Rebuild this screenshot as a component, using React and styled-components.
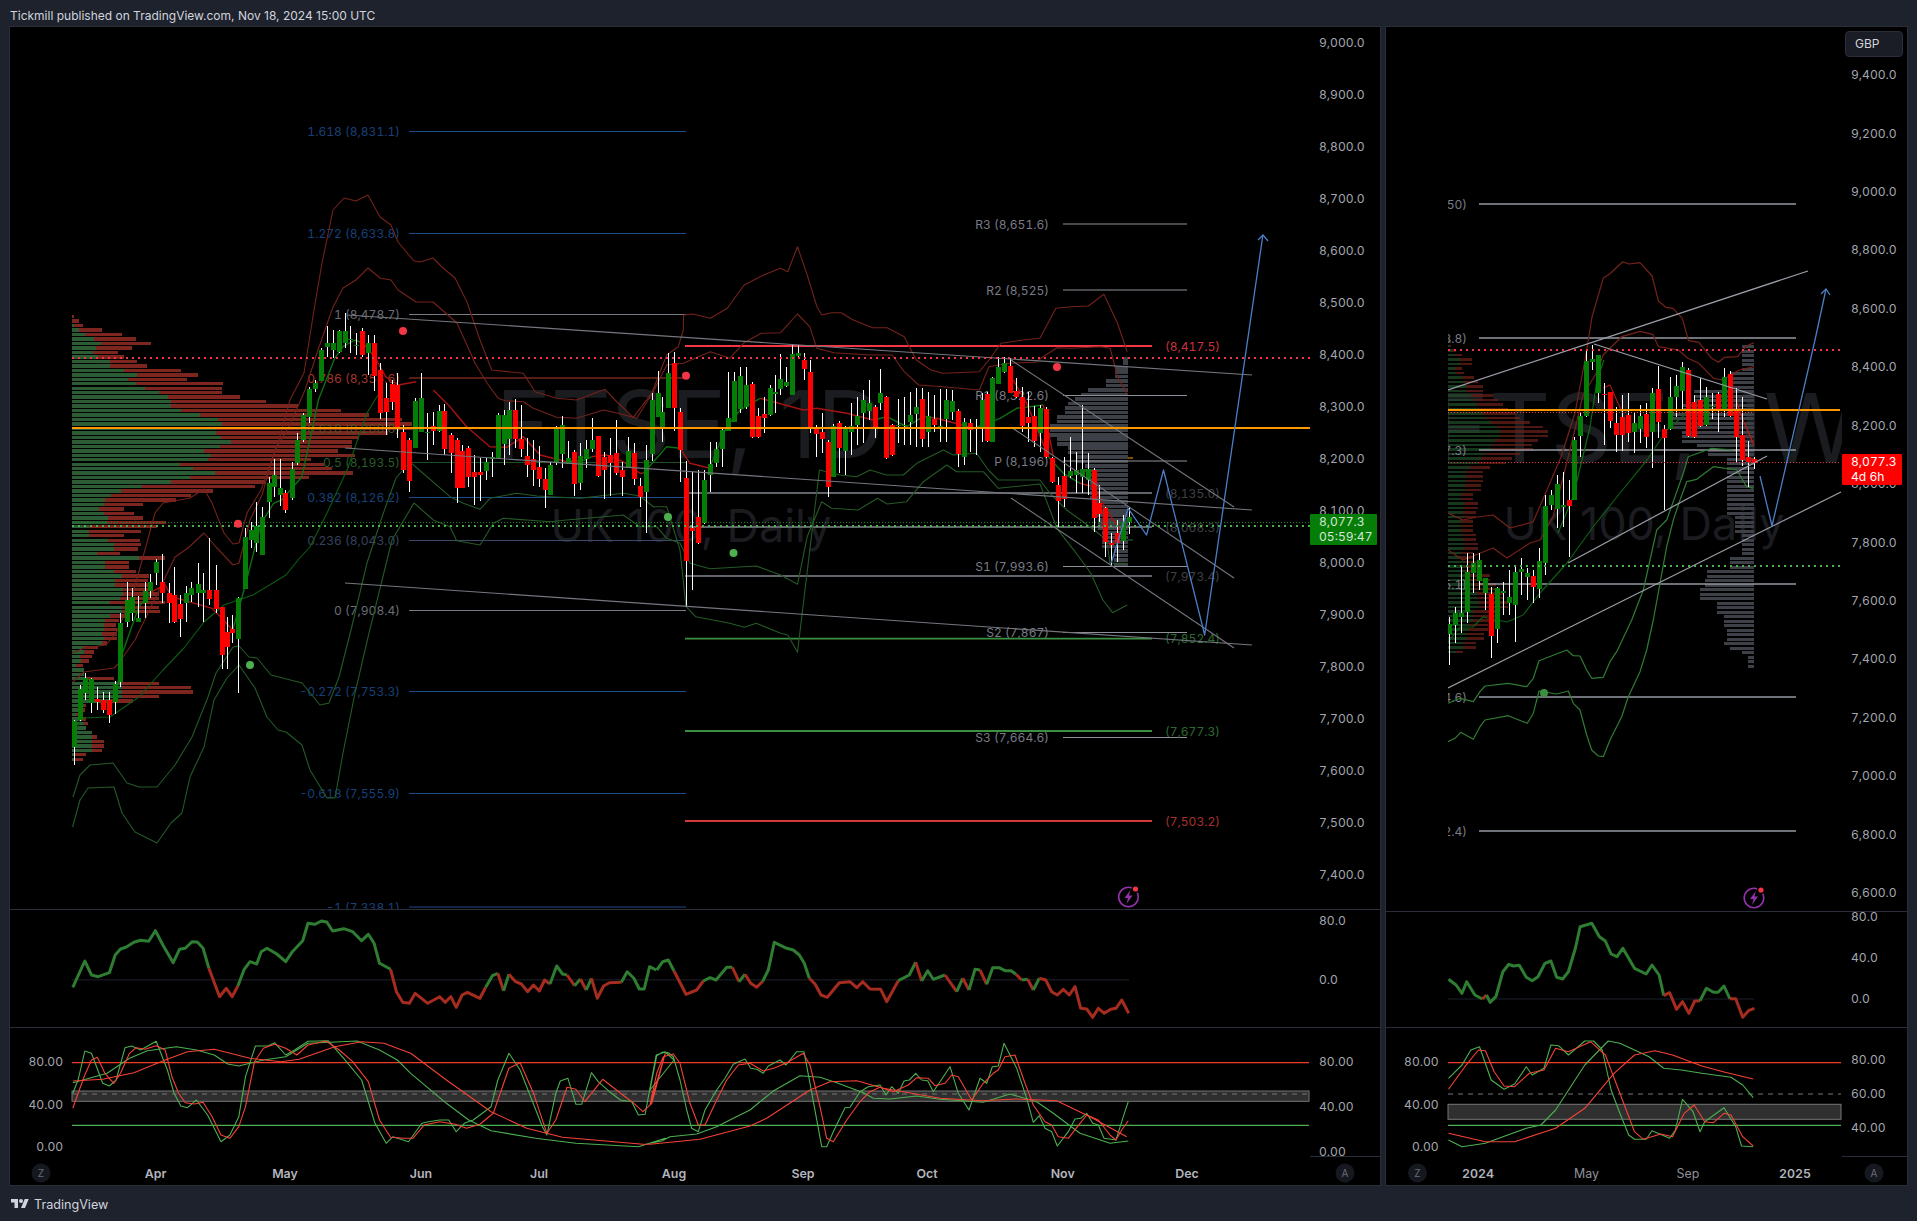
import React from "react";
import styled, { createGlobalStyle } from "styled-components";

const FONT = '"Inter", "Liberation Sans", sans-serif';

const GlobalStyle = createGlobalStyle`
  html, body { margin: 0; background: #1e222d; }
  body { font-family: ${FONT}; font-variant-numeric: tabular-nums; }
`;

const Page = styled.div`
  width: 1917px;
  height: 1221px;
  display: flex;
  flex-direction: column;
  overflow: hidden;
  background: #1e222d;
`;

const TopBar = styled.div`
  height: 26px;
  display: flex;
  align-items: center;
  padding: 5px 10px 0;
  box-sizing: border-box;
  color: #d1d4dc;
  font-size: 12px;
  font-variant-numeric: normal;
`;

const Charts = styled.div`
  display: flex;
  gap: 4px;
  padding-left: 9px;
`;

const Panel = styled.div`
  width: ${(p) => p.$w}px;
  display: flex;
  flex-direction: column;
  background: #000;
  border: 1px solid #2a2e39;
`;

const Pane = styled.div`
  height: ${(p) => p.$h}px;
  display: flex;
  box-sizing: border-box;
  border-bottom: ${(p) => (p.$last ? "none" : "1px solid #2a2e39")};
  position: relative;
`;

const Plot = styled.svg`
  display: block;
  flex: none;
  background: #000;
`;

const PriceAxis = styled.div`
  flex: 1;
  position: relative;
`;

const AxisStack = styled.div`
  margin-top: ${(p) => p.$offset}px;
`;

const AxisRow = styled.div`
  height: ${(p) => p.$step}px;
  line-height: ${(p) => p.$step}px;
  padding-left: ${(p) => p.$pad}px;
  font-size: 12.1px;
  color: #a3a6af;
  white-space: nowrap;
`;

const PriceTag = styled.div`
  position: absolute;
  left: ${(p) => p.$left}px;
  top: ${(p) => p.$top}px;
  width: ${(p) => p.$w}px;
  height: 31px;
  padding-left: ${(p) => p.$pad}px;
  box-sizing: border-box;
  background: ${(p) => p.$bg};
  color: ${(p) => p.$fg};
  font-size: 12.1px;
  line-height: 14.5px;
  padding-top: 1px;
  border-radius: 1px;
`;

const CurrencyButton = styled.div`
  position: absolute;
  left: 3px;
  top: 4px;
  width: 58px;
  height: 26px;
  box-sizing: border-box;
  padding-left: 9px;
  line-height: 24px;
  font-size: 12px;
  color: #d1d4dc;
  background: #1a1d26;
  border: 1px solid #2a2e39;
  border-radius: 4px;
`;

const Footer = styled.div`
  flex: 1;
  display: flex;
  align-items: center;
  gap: 4px;
  padding: 1px 0 0 10px;
  color: #d1d4dc;
  font-size: 12.6px;
`;

const Logo = styled.svg`
  width: 20px;
  height: 14px;
  fill: #d1d4dc;
`;

const Watermark = styled.text`
  font-size: ${(p) => p.$size}px;
  font-variant-numeric: normal;
  fill: #1b1c20;
  text-anchor: middle;
`;

const ChartLabel = styled.text`
  font-size: 12.05px;
  fill: ${(p) => p.$c};
  text-anchor: ${(p) => p.$anchor || "end"};
  dominant-baseline: central;
`;

const TimeLabel = styled.text`
  font-size: 12.4px;
  font-weight: ${(p) => (p.$bold ? 600 : 400)};
  fill: ${(p) => (p.$bold ? "#b2b5be" : "#8f929b")};
  text-anchor: middle;
  dominant-baseline: central;
`;

const ScaleChip = styled.text`
  font-size: 10px;
  fill: #6a6d78;
  text-anchor: middle;
  dominant-baseline: central;
`;

// points below were read off crops of the picture, so each list keeps its crop's scale
const crop = (x0, y0, sx) => (str) =>
  str
    .trim()
    .split(/\s+/)
    .map((p) => {
      const [a, b] = p.split(",").map(Number);
      return `${(x0 + a / sx).toFixed(1)},${(y0 + b / 3).toFixed(1)}`;
    })
    .join(" ");
const Z1 = crop(0, 0, 2.45);
const Z2 = crop(640, 200, 2.063);
const Z3 = crop(1340, 0, 2.717);
const Z4 = crop(0, 880, 2.24);
const Z5 = crop(1000, 880, 1.71);
const Z6 = crop(0, 400, 2.45);
const Z7 = crop(290, 330, 3);
const Z8 = crop(660, 330, 3);
const Z9 = crop(1440, 340, 3);
const Z10 = crop(650, 910, 3);
const Z11 = crop(1440, 620, 3);
const join = (...a) => a.join(" ");

// "g 10,20 30,40 r 50,60" -> coloured runs that share their end points
const runs = (conv, str) => {
  const out = [];
  let last = null;
  str.trim().split(/\s+/).forEach((tok) => {
    if (tok === "g" || tok === "r") {
      out.push({ c: tok, pts: last ? [last] : [] });
    } else {
      const p = conv(tok);
      out[out.length - 1].pts.push(p);
      last = p;
    }
  });
  return out.map((r) => ({ c: r.c, pts: r.pts.join(" ") }));
};

const parseCandles = (str) =>
  str
    .trim()
    .split("\n")
    .map((l) => {
      const [t, x, wt, bt, bb, wb] = l.trim().split(/\s+/);
      return { up: t === "g", x: +x, wt: +wt, bt: +bt, bb: +bb, wb: +wb };
    });

const LEFT_CANDLES = parseCandles(`
g 73.5 720 720.7 747 765
g 79.6 685 689 720 721
g 85.3 673 678 693 700
g 91.4 678 679 703 713
r 97 687 698.7 701.7 710
r 103 692 700 710 713
r 109 692 700 715 723
g 114.7 681 684 702 714
g 120.4 613 623 682 687
g 126.5 582 600 622 627
g 132 588 597 613 621
g 138 596 618 622 620
g 144.5 582 591 603 618
g 150 574 582 591 598
g 156 559 562 573 585
r 162.4 554 582 593 603
r 168.5 583 593 603 623
r 174 567 595 622 623
r 179.6 595 604 619 637
g 185.7 586 593 603 622
g 191 582 588 595 602
g 197.5 563 584 593 607
g 203 573 590 593 622
r 209 538 590 599 605
r 215.5 565 590 609 613
r 221.6 607 607 655 669
r 226.5 617 632 647 669
r 232 615 629 633 643
g 238.4 597 598 639 693
g 244.5 528 537 589 589
g 250.6 522 530 540 548
g 256 502 526 543 552
g 262.4 507 517 555 555
g 268.6 477 483 502 518
g 274 459 475 487 497
g 279.6 459 488 495 506
r 285 490 493 510 513
g 291.7 462 469 498 500
g 297.3 433 440 463 465
g 303.3 413 415 440 442
g 309.3 387 389 417 423
g 315.3 380 383 389 392
g 321.3 348 350 381 381
g 327 326 343 347 357
g 332.7 330 343 350 358
g 338.7 330 331 352 353
g 344.5 313 331 343 348
g 350 326 339 340 353
g 356 333 345 346 355
r 362.3 328 331 355 357
g 368.3 335 343 353 375
r 374.3 335 343 376 391
r 380.3 363 370 413 419
r 386.3 383 398 412 435
r 391.7 380 384 402 410
r 397.3 373 385 429 438
r 403.3 425 432 470 473
r 409.3 438 440 481 492
g 415.3 398 401 448 448
g 421.3 373 398 432 432
g 427.3 413 432 433 460
r 433.3 412 426 431 445
g 439.3 405 411 431 432
r 444.3 404 411 449 455
r 450.7 433 435 453 473
r 456.7 438 440 488 503
r 462.3 445 451 488 488
r 468.3 446 448 477 487
r 474.3 455 472 477 505
r 480.3 458 472 475 501
g 486.3 458 462 471 480
g 492.3 452 457 459 477
g 497.7 413 415 458 459
g 503.7 410 415 444 465
g 509.3 402 410 439 455
r 515.3 399 410 439 448
r 521.3 405 439 449 457
r 527.3 438 456 465 477
r 533.3 440 459 470 486
r 539.3 446 467 479 487
r 545.3 468 479 490 508
g 550.3 462 465 495 495
g 556.3 426 428 463 465
g 562.3 416 425 454 468
g 568.3 441 458 464 463
r 574.3 450 452 484 496
g 580.3 443 456 483 490
g 586.3 440 449 459 468
g 592.3 418 440 449 452
r 598.3 436 436 476 477
r 604.3 452 457 470 499
r 610.3 438 455 463 496
r 615.7 420 453 473 475
r 621.7 462 470 477 496
g 627.7 437 451 468 468
r 633.7 443 453 479 485
r 639.7 478 486 497 507
g 645.7 445 460 492 533
g 651.7 393 400 454 461
g 657.7 371 393 417 417
g 662.3 397 412 427 442
g 668.3 353 373 408 408
r 674.3 352 363 408 431
r 680.3 408 412 450 482
r 686.3 461 478 561 607
r 692.3 472 528 531 590
r 698.3 470 517 543 544
g 704.3 470 480 523 524
g 710.3 442 464 475 492
g 715.7 442 449 463 467
g 721.7 428 430 449 467
g 727.7 372 418 431 431
g 733.7 372 381 422 422
g 739.7 367 376 409 413
g 745.7 367 385 407 409
r 751.7 382 384 437 438
r 757.7 408 416 437 438
r 763.7 397 414 418 433
g 769.7 385 388 415 416
g 775 375 392 394 413
g 780.3 354 379 389 395
g 786.3 367 382 386 387
g 792.3 345 354 395 395
g 798.3 345 353 356 357
r 804.3 353 360 369 380
r 810.3 360 372 427 433
r 816.3 425 429 434 457
r 822.3 413 432 439 453
r 827.7 440 442 487 497
g 833 424 426 477 477
r 839 421 423 448 473
g 845 426 428 451 475
g 851 403 426 432 455
g 857 397 416 425 445
g 863 390 400 413 443
g 869 380 403 411 420
r 875 405 407 427 438
g 880.3 369 393 403 410
r 886.3 396 397 458 459
r 892.3 424 425 455 456
g 898.3 399 425 426 443
g 904.3 397 425 426 445
g 910.3 392 415 422 445
g 916.3 388 407 414 447
r 922.3 388 399 439 447
g 928.3 392 416 432 447
r 933.7 395 419 425 432
g 939.7 389 426 428 442
g 945.7 389 400 419 442
g 951.7 390 401 412 420
r 957.7 409 411 454 467
g 963.7 418 422 457 465
r 969.7 419 423 430 452
g 975.7 419 427 429 455
g 981.7 393 400 429 442
r 987 392 394 441 442
g 992.3 377 378 442 442
g 998.3 357 367 384 384
g 1004.3 357 363 372 373
r 1010.3 358 366 393 393
r 1016.3 378 391 397 398
r 1022.3 387 397 426 432
r 1028.3 392 417 423 442
r 1034.3 406 416 441 447
g 1040.3 405 408 433 452
r 1045.7 407 409 457 458
r 1051.7 457 458 482 483
r 1057.7 477 485 501 527
r 1063.7 457 476 499 507
g 1069.7 437 471 476 478
g 1075.7 452 470 475 493
g 1081.7 405 469 477 493
g 1087.7 453 469 480 495
r 1093.7 468 470 518 532
r 1098.7 485 503 514 522
r 1104.7 507 508 542 557
r 1110.7 533 543 544.5 566
r 1116.7 520 533 543 562
g 1122.7 515 522 541 550
g 1128.5 507 517 522 534
`);

const RIGHT_CANDLES = parseCandles(`
g 1449.3 617 624 634 665
g 1455.3 607 613 625 643
g 1461.3 565 613 617 633
g 1467.3 553 572 612 623
g 1473.3 553 563 573 593
g 1479.3 553 560 581 590
g 1485.3 578 578 593 610
r 1491.3 587 594 636 658
g 1497.3 587 588 629 643
g 1503.3 582 591 593 615
g 1509.3 570 597 603 615
g 1515.3 565 572 605 642
g 1521.3 558 569 572 595
g 1527.3 568 573 577 600
r 1533.3 570 576 587 603
g 1539.3 548 561 589 598
g 1545.3 495 506 563 575
g 1551.3 490 495 505 510
g 1557.3 475 484 509 528
g 1563.3 472 505 507 527
r 1569.3 480 500 506 557
g 1574.3 437 440 500 500
g 1580.3 412 416 436 457
g 1586.3 350 361 416 417
g 1592.3 345 359 362 370
g 1598.3 355 355 393 403
r 1604.3 383 393.5 395 445
r 1610.3 392 392 421 428
r 1616.3 407 423 435 452
r 1622.3 395 417 435 451
r 1628.3 393 415 433 442
g 1634.3 412 423 432 453
g 1640.3 405 416 429 443
r 1646.3 403 414 437 448
g 1652.3 388 393 432 468
r 1658.3 366 389 422 438
r 1664.3 425 429 438 510
g 1670.3 377 397 429 430
g 1676.3 375 386 397 417
g 1682.3 362 367 391 410
r 1688.3 368 370 436 437
r 1694.3 395 402 437 438
r 1700.3 378 400 426 427
g 1706.3 387 397 425 426
g 1712.3 393 406 407 419
r 1718.3 392 394 410 432
g 1724.3 368 377 410 417
r 1730.3 371 374 416 417
r 1736.3 388 411 437 463
r 1742.3 397 435 460 466
r 1748.3 441 457 462 487
r 1754.3 457 459 463 469
`);

// green width, total width; rows 4.47px apart from y=315
const LEFT_PROFILE = `0,2 0,7 2,11 7,30 13,50 22,64 29,79 24,60 21,46 26,52 38,65 38,75 52,109 65,126 56,115 64,151 73,150 87,150 96,168
99,194 99,226 109,269 128,297 146,330 150,340 144,345 144,316 149,287 159,280 148,280 132,266 139,283 136,239 108,252 121,260 143,281 118,237 99,193 70,183 49,141 39,119 33,104 32,71 27,52 32,62 36,71 35,94 17,85 17,69 17,52 36,68 42,69 42,66 25,48 67,93 33,57 33,57 42,64 50,77 43,76 43,78 51,79 51,87 48,87 38,93 50,87 50,88 38,53 33,47 32,44 32,45 30,45 32,45 30,35 12,26 12,22 8,20 9,17 4,11 12,12 12,12 13,42 50,87 50,119 50,121 50,87 38,61 12,14 6,13 4,8 10,14 12,16 14,14 20,20 20,25 20,32 20,32 20,30 3,14 3,11`
  .split(/\s+/)
  .map((r) => r.split(",").map(Number));

// y, total width
const RIGHT_VOL = [[340,3],[345,8],[350,14],[355,24],[360,24],[365,14],[370,16],[375,26],[380,30],[385,35],[390,45],[395,50],[400,55],[405,60],[410,68],[415,72],[420,82],[425,95],[430,100],[435,90],[440,84],[445,85],[450,72],[455,64],[460,58],[465,42],[470,35],[480,33],[490,25],[500,30],[510,28],[520,25],[530,28],[540,30],[550,25],[560,32],[570,42],[580,48],[590,55],[600,60],[610,48],[620,40],[630,36],[640,28],[650,15]];

const stepValue = (table, y) => {
  let v = table[0][1];
  table.forEach(([ty, w]) => {
    if (y >= ty) v = w;
  });
  return v;
};

const LEFT_GRAY = [[357,5],[363,13],[376,15],[378,22],[384,31],[387,40],[392,47],[396,53],[400,60],[405,63],[413,71],[421,78],[430,80],[436,71],[444,60],[452,51],[462,43],[470,38],[500,34],[515,30],[528,26],[545,14],[560,14],[566,0]];
const RIGHT_GRAY = [[345,12],[368,24],[390,60],[400,72],[412,86],[428,72],[440,57],[446,46],[455,27],[497,27],[515,19],[533,12],[553,24],[567,47],[575,49],[587,54],[600,37],[613,30],[627,27],[640,30],[643,30],[646,24],[650,12],[655,6],[665,0]];

const RSI_LEFT = [
  ...runs(Z4, `g 163,322 190,243 205,285 220,290 245,278 258,225 270,207 282,202 300,187 315,181 333,184 348,152 365,195 388,248 402,208 415,205 430,185 442,186 455,205 468,265 r 492,350 507,325 520,350 533,318 g 547,268 560,245 575,252 585,215 598,205 620,222 640,245 655,215 678,182 690,130 705,133 720,123 732,126 745,153 770,146 790,155 810,182 825,163 838,190 850,250 875,268 r 888,335 902,367 917,370 930,340 958,370 985,350 997,367 1010,350 1022,382 1035,345 1047,337 1075,355 1088,322 g 1103,287 1115,280 r 1128,332 g 1140,283 r 1155,305 1168,312 1182,335 1195,315 1208,333 1220,300 1232,312 g 1247,258 1260,282 1270,285 r 1287,317 g 1300,297 r 1313,330 g 1325,295 r 1338,355 1352,318 1365,308 1392,307 g 1405,275 1420,295 1432,327 1443,327 1455,260 1470,270`),
  ...runs(Z10, `g 20,180 38,155 55,150 72,183 r 108,253 140,240 160,213 g 180,203 198,210 230,172 247,172 r 267,215 g 285,193 r 302,220 320,232 338,214 g 355,180 373,97 410,115 430,120 448,135 463,160 478,205 r 495,222 513,255 532,262 568,218 600,215 620,233 638,215 660,237 692,238 710,275 745,212 g 778,195 797,157 r 815,213 g 833,182 850,208 885,195 r 920,245 g 938,205 r 957,240 g 975,178 990,180 r 1010,223 g 1028,173 1047,173 1065,182 1083,182 1098,193 r 1115,210 g 1133,208 r 1150,240 g 1168,205 r 1187,210 1205,245 1222,255 1240,238 1258,255 1275,230 1292,295 1310,297 1328,322 1345,295 1363,310 1382,298 1398,295 1415,270 1436,310`),
];

const RSI_RIGHT = runs(Z5, `g 767,298 780,315 790,340 798,305 812,345 825,357 r 832,345 g 838,367 848,350 860,275 870,253 878,258 888,256 900,292 910,302 920,290 932,250 942,243 952,292 962,297 972,275 984,205 992,140 1012,130 1025,170 1035,183 1045,222 1055,230 1065,205 1085,265 1105,282 1115,255 1127,285 1135,347 r 1145,338 1157,388 1167,365 1178,400 1188,363 1197,362 g 1208,325 1220,337 1228,337 1238,318 1248,356 r 1258,356 1270,412 1280,392 1290,385`);

const STOCH_LEFT = [
  { c: "#4caf50", pts: join(Z4("163,640 175,600 190,513 205,520 230,610 245,618 260,600 280,503 295,498 315,510 350,484 375,570 390,640 405,678 420,683 440,660 465,705 495,785 515,765 535,710 550,590 572,498 600,498 615,488 640,525 660,510 690,484 735,482 770,535 810,600 840,730 865,790 880,770 915,785 945,730 960,725 985,720 1005,720 1022,755 1040,730 1060,720 1100,680 1115,600 1140,520 1165,570 1215,740 1225,765 1245,640 1255,603 1272,595 1290,673 1303,673 1325,578 1340,605 1365,635 1390,660 1415,665 1430,705 1445,703 1470,525 1490,516 1510,540"), Z10("0,540 20,437 38,426 55,428 70,440 90,510 110,600 125,655 145,665 165,600 200,540 225,505 250,463 285,447 302,475 320,478 340,490 355,468 390,450 408,465 440,425 462,425 480,520 515,710 530,710 550,665 585,593 600,592 630,545 655,530 690,525 708,555 725,530 745,550 762,513 778,510 797,490 815,510 833,512 850,545 900,470 925,550 957,600 990,505 1010,520 1027,470 1045,468 1062,400 1100,475 1130,565 1150,637 1168,617 1185,655 1205,665 1222,708 1255,665 1275,627 1292,625 1310,610 1328,640 1345,645 1362,685 1398,690 1420,620 1435,575")) },
  { c: "#4caf50", pts: join(Z4("163,608 200,595 240,580 290,535 330,512 395,500 440,510 480,525 510,552 535,558 590,540 640,530 690,490 800,483 850,510 890,540 920,580 1000,670 1050,720 1100,752 1200,775 1290,790 1430,800 1490,775"), Z10("0,700 35,693 60,680 140,672 200,650 250,625 300,600 370,543 450,497 510,502 560,518 640,548 670,565 720,567 800,558 870,568 1000,577 1080,552 1160,575 1210,610 1290,670 1380,700 1435,693")) },
  { c: "#f44336", pts: join(Z4("163,685 175,640 190,585 205,540 218,532 235,580 255,610 270,580 290,520 305,503 325,508 350,497 370,510 385,590 400,640 415,668 435,672 455,667 475,710 495,765 515,775 535,740 550,680 570,545 590,505 615,493 640,505 665,525 690,495 730,483 760,510 790,545 825,605 850,720 875,772 905,775 925,775 950,735 985,725 1020,733 1045,745 1075,733 1105,700 1140,565 1165,548 1195,640 1225,760 1245,720 1270,622 1290,628 1310,665 1350,598 1390,640 1420,670 1440,695 1460,670 1490,520"), Z10("0,585 20,490 40,440 70,432 90,460 120,580 145,645 165,645 200,570 230,510 265,465 300,460 340,483 375,473 410,458 460,430 480,465 510,590 530,685 550,695 590,630 630,575 660,545 690,532 730,545 775,525 800,503 835,505 855,527 885,520 905,495 925,500 965,570 1000,520 1030,490 1045,480 1065,440 1095,435 1125,520 1150,585 1185,635 1205,645 1225,680 1255,685 1290,640 1310,615 1345,630 1380,675 1398,690 1415,660 1435,632")) },
  { c: "#f44336", pts: join(Z4("163,603 230,598 300,578 370,540 420,515 480,508 560,535 630,545 670,538 750,500 810,485 860,490 920,520 1000,600 1100,695 1180,745 1260,772 1440,793"), Z10("0,703 150,688 300,648 350,625 480,540 540,515 620,512 700,535 870,565 1000,572 1100,567 1220,572 1320,620 1430,680")) },
];

const STOCH_RIGHT = [
  { c: "#4caf50", pts: Z5("767,595 790,555 805,510 820,500 840,600 862,628 880,612 900,560 910,585 930,565 942,495 955,497 972,525 1000,483 1015,483 1030,510 1045,630 1060,700 1075,765 1085,778 1105,778 1115,752 1128,762 1145,775 1155,750 1167,658 1185,695 1197,755 1205,725 1238,683 1258,740 1268,798 1288,800") },
  { c: "#4caf50", pts: Z5("767,780 790,800 830,790 860,770 900,745 925,735 950,690 1000,555 1040,483 1060,490 1110,530 1135,565 1165,570 1200,580 1250,592 1270,615 1288,653") },
  { c: "#f44336", pts: Z5("767,628 795,560 818,510 830,512 845,575 862,618 880,620 905,580 930,570 950,505 972,515 1010,485 1035,525 1060,640 1085,755 1100,778 1130,762 1150,770 1170,700 1187,675 1205,725 1220,728 1238,700 1250,705 1270,770 1288,798") },
  { c: "#f44336", pts: Z5("767,760 830,785 880,785 950,745 1000,685 1050,580 1085,525 1120,512 1150,525 1200,558 1240,577 1288,597") },
];

const BAND_RED = "#74221a";
const BAND_GREEN = "#245a26";

const LEFT_BANDS = [
  { c: BAND_RED, pts: join("72.6,653 84,648 106,645 116,633 131,600 143,557 155,513 163,503 190,498 204,489 212,503 224,533 233,544 239,543 247,513 261,490 278,443 290,400 304,373 314,310 322,263 333,210 344,198 356,201 368,195 380,217 391,225 398,242 414,261 420,262 433,258 443,268 455,278 467,302 480,340", Z7("605,120 700,130 735,185 800,205 860,210 945,178 975,210 1030,262 1085,190 1130,75 1165,50 1180,0"), Z2("90,345 110,342 145,355 180,325 215,255 255,225 290,205 305,215 325,140 345,225 365,320 375,345 395,338 415,338 440,360 480,383 510,383 545,410 570,480 600,510 625,520 700,515 720,480 745,430 790,420 825,415 858,325 890,320 925,318 957,283 985,370 1005,455")) },
  { c: BAND_RED, pts: join("72.6,682 84,672 114,668 118,664 135,640 175,557 188,548 204,533 216,547 233,565 239,563 250,520 262,495 275,450 290,425 305,390 318,350 333,307 343,288 356,280 368,268 380,278 391,280 398,290 416,302 433,302 457,323 475,363 487,383", Z7("625,205 645,212 700,215 730,235 800,262 860,265 940,240 985,250 1040,265 1090,185 1130,105 1180,100"), Z2("145,455 185,475 215,428 250,400 290,398 325,342 350,380 365,445 400,458 475,465 520,465 545,515 575,555 625,560 700,570 720,500 760,490 815,487 860,443 890,445 950,440 970,445 985,530 1005,582")) },
  { c: BAND_GREEN, pts: join("73,797 80,775 90,765 113,763 127,783 139,787 157,787 175,765 192,737 208,697 216,673 233,647 239,646 249,657 257,658 271,675 302,683 320,705 329,703 339,677 351,630 367,563 382,517 396,478 410,462", Z7("480,500 520,520 570,538 600,505 680,490 740,498 870,505 1000,490 1050,498 1090,530 1130,530 1170,660"), Z2("95,1220 115,1250 185,1270 215,1282 240,1270 290,1300 305,1305 325,1357 370,810"), Z8("540,435 590,440 630,420 680,435 730,435 770,400 850,360 880,375 950,370 985,420 1015,450 1140,450 1170,490 1220,540 1290,590 1340,630 1350,700 1400,700")) },
  { c: BAND_GREEN, pts: join("72.6,827 80,800 88,788 114,787 122,813 135,832 145,837 157,843 171,823 182,813 190,777 204,747 214,700 227,678 239,665 255,688 267,717 278,730 286,732 302,745 310,770 327,798 335,798 343,753 355,693 369,633 392,540 414,503", Z7("430,570 480,590 500,632 570,645 610,580 640,565 780,575 830,570 1000,555 1050,590 1100,590 1130,625 1170,640 1200,700 1260,716"), Z2("240,1098 290,1125 325,1153 345,1010 375,905 395,925 450,930 490,895 510,912 550,905"), Z8("790,455 860,405 890,425 970,425 1015,475 1140,462 1170,540"), Z2("860,985 900,1060 930,1120 955,1200 975,1238 1005,1215")) },
  { c: "#0d5c12", pts: "73,735 82,718 110,717 139,697 163,670 184,648 204,622 224,605 253,595 286,575 298,560 310,547 327,513 347,470 367,413 378,395" },
];

const LEFT_MA = [
  ...runs(Z6, `g 282,905 300,760 340,620 372,575 r 405,555 420,590 520,625 570,690 g 600,560 640,370 670,310 690,300 740,230 780,0`),
  ...runs(Z1, `g 780,1200 820,1075 840,1040 870,1020 890,1030 r 920,1075 945,1130 975,1155 1020,1145`),
  ...runs(Z7, `r 430,180 480,230 530,290 600,350 650,352 700,320 750,375 830,395 g 885,390 905,380 r 950,375 1000,395 1050,430 1060,430 g 1130,350 1170,355 r 1200,400 1260,415`),
  ...runs(Z8, `g 150,410 200,290 240,240 300,205 r 430,240 470,235 560,250 640,270 g 680,260 740,290 790,260 r 830,265 940,295 g 1020,265 1070,235 1150,225 r 1180,380`),
  ...runs(Z8, `r 1060,150 1100,220 1165,380 g 1210,430 1260,460 r 1300,470 1340,540 1380,600`),
];

const RIGHT_BANDS = [
  { c: BAND_RED, pts: join("1448,513 1463,520 1477,517 1493,515 1510,528 1533,522 1544,497 1561,457 1575,413 1585,360 1592,317", Z3("715,835 735,820 768,785 785,792 815,788 848,828 865,903 885,922 905,925 930,955 947,1022 975,1027 1010,1075 1028,1087 1045,1072 1080,1070 1105,1037 1125,1028")) },
  { c: BAND_RED, pts: join("1448,550 1463,560 1493,548 1507,558 1530,543 1540,540 1553,517 1570,450 1583,395 1597,372", Z3("715,1065 765,1010 815,994 850,1003 865,1040 920,1050 945,1075 975,1090 1015,1135 1040,1140 1085,1110 1125,1100")) },
  { c: "#2f7d33", pts: join(Z11("24,250 60,235 100,245 120,215 135,198 205,190 260,200 280,175 297,122 380,90 400,107 420,108 440,150 455,175 490,172 510,125 530,95 575,0"), Z9("610,750 650,570 680,540 730,400 745,350 815,325 880,330")) },
  { c: "#2f7d33", pts: join(Z11("24,365 45,355 62,337 100,358 120,320 135,300 205,287 262,310 280,280 297,213 350,222 385,213 400,250 420,270 440,345 455,390 475,408 490,410 510,360 545,290 565,230 600,155 620,90 640,0"), Z9("680,620 700,540 720,480 740,425 770,418 820,380 890,390 920,440 940,445")) },
  { c: "#0d5c12", pts: "1448,642 1460,627 1473,627 1483,617 1507,622 1523,615 1540,593 1567,563 1593,527 1620,493 1647,460 1667,430 1687,413" },
  { c: "#0d6a12", pts: "1558,533 1573,497 1590,427 1597,380 1604,360" },
  { c: "#a81212", pts: "1603,388 1610,385 1622,412" },
  { c: "#c01818", pts: "1736,400 1743,420 1754,445" },
];

const FIB_LEFT = [
  ["1.618 (8,831.1)", 131.5, "#1c4a8c", "#17407a"],
  ["1.272 (8,633.8)", 233.5, "#1c4a8c", "#17407a"],
  ["1 (8,478.7)", 314.5, "#787b86", "#6a6d78"],
  ["0.786 (8,355.6)", 378, "#b23a30", "#a5352c"],
  ["0.618 (8,260.8)", 428, "#5a5a1c", "#4f5120"],
  ["0.5 (8,193.5)", 462.5, "#1f4f22", "#2a5c2c"],
  ["0.382 (8,126.2)", 497.5, "#1c4a8c", "#17407a"],
  ["0.236 (8,043.0)", 540.5, "#3c4a6a", "#36435f"],
  ["0 (7,908.4)", 610.5, "#787b86", "#6a6d78"],
  ["-0.272 (7,753.3)", 691.5, "#1c4a8c", "#17407a"],
  ["-0.618 (7,555.9)", 793.5, "#1c4a8c", "#17407a"],
  ["-1 (7,338.1)", 907, "#1c4a8c", "#17407a"],
];

const PIVOTS_LEFT = [
  ["R3 (8,651.6)", 224],
  ["R2 (8,525)", 290],
  ["R1 (8,322.6)", 395.5],
  ["P (8,196)", 461],
  ["S1 (7,993.6)", 566.5],
  ["S2 (7,867)", 632.5],
  ["S3 (7,664.6)", 737.5],
];

const LEVELS_LEFT = [
  ["(8,417.5)", 346, "#f23645", "#c8313f"],
  ["(8,135.0)", 493, "#62646c", "#3f4147"],
  ["(8,068.3)", 527, "#62646c", "#3f4147"],
  ["(7,973.4)", 576, "#62646c", "#3f4147"],
  ["(7,852.4)", 638.7, "#3b8f40", "#2c6b30"],
  ["(7,677.3)", 731, "#3b8f40", "#2c6b30"],
  ["(7,503.2)", 821, "#d6393a", "#a8302e"],
];

const Candles = ({ data }) => (
  <g>
    {data.map((c) => (
      <g key={c.x}>
        <rect x={Math.round(c.x)} y={c.wt} width="1" height={c.wb - c.wt} fill="#fff" shapeRendering="crispEdges" />
        <rect x={Math.round(c.x) - 2} y={c.bt} width="5" height={Math.max(c.bb - c.bt, 1)} fill={c.up ? "#067d06" : "#ff0000"} shapeRendering="crispEdges" />
      </g>
    ))}
  </g>
);

const Line = ({ pts, c, w = 1, dash }) => (
  <polyline points={pts} fill="none" stroke={c} strokeWidth={w} strokeDasharray={dash} strokeLinejoin="round" />
);

const HLine = ({ x1, x2, y, c, w = 1, dash }) => (
  <line x1={x1} x2={x2} y1={y} y2={y} stroke={c} strokeWidth={w} strokeDasharray={dash} />
);

const Dot = ({ x, y, c }) => <circle cx={x} cy={y} r="4" fill={c} />;

const Bolt = ({ x, y }) => (
  <g>
    <circle cx={x} cy={y} r="9.8" fill="none" stroke="#9431ad" strokeWidth="1.6" />
    <path d={`M${x + 2} ${y - 7} L${x - 4} ${y + 1} L${x - 0.5} ${y + 1} L${x - 2} ${y + 7} L${x + 4} ${y - 1.5} L${x + 0.5} ${y - 1.5} Z`} fill="#9431ad" />
    <circle cx={x + 7} cy={y - 8} r="4" fill="#000" />
    <circle cx={x + 7} cy={y - 8} r="2.6" fill="#f23645" />
  </g>
);

const Arrow = ({ pts, head }) => (
  <g>
    <Line pts={pts} c="#4a7fc7" w={1.3} />
    <polyline points={head} fill="none" stroke="#4a7fc7" strokeWidth="1.3" />
  </g>
);

const LeftMain = () => {
  const rows = LEFT_PROFILE.map(([g, t], i) => ({ y: 315 + i * 4.47, g, t }));
  const gray = Array.from({ length: 47 }, (_, i) => 357 + i * 4.47);
  return (
    <Plot width="1300" height="882" viewBox="10 27 1300 882">
      <Watermark x="690" y="458" $size="93">FTSE, 1D</Watermark>
      <Watermark x="691" y="542" $size="45">UK 100, Daily</Watermark>
      {rows.map((r) => (
        <g key={r.y} shapeRendering="crispEdges">
          <rect x={72} y={r.y} width={r.t} height="3.4" fill="#7d2620" />
          <rect x={72} y={r.y} width={r.g} height="3.4" fill="#2b5c33" />
        </g>
      ))}
      {gray.map((y) => {
        const w = stepValue(LEFT_GRAY, y);
        return <rect key={y} x={1128 - w} y={y} width={w} height="3.6" fill="#3e4047" shapeRendering="crispEdges" />;
      })}
      <rect x="1128" y="457.5" width="5" height="1" fill="#ff9800" />
      <rect x="1128" y="575.5" width="5" height="1" fill="#ff9800" />
      <rect x="1128" y="492.5" width="5" height="1" fill="#b0303a" />
      <rect x="1128" y="539.5" width="5" height="1" fill="#1f6b4a" />
      {FIB_LEFT.map(([t, y, lc, tc]) => (
        <g key={t}>
          <ChartLabel x="400" y={y} $c={tc}>{t}</ChartLabel>
          <HLine x1={409} x2={686} y={y} c={lc} w={1.2} />
        </g>
      ))}
      {PIVOTS_LEFT.map(([t, y]) => (
        <g key={t}>
          <ChartLabel x="1049" y={y} $c="#787b86">{t}</ChartLabel>
          <HLine x1={1063} x2={1187} y={y} c="#8e9199" w={1.2} />
        </g>
      ))}
      {LEVELS_LEFT.map(([t, y, lc, tc]) => (
        <g key={t}>
          <HLine x1={685} x2={1152} y={y} c={lc} w={1.8} />
          <ChartLabel x="1165" y={y} $c={tc} $anchor="start">{t}</ChartLabel>
        </g>
      ))}
      {LEFT_BANDS.map((b) => <Line key={b.pts} pts={b.pts} c={b.c} w={1.1} />)}
      {LEFT_MA.map((m) => <Line key={m.pts} pts={m.pts} c={m.c === "g" ? "#0e6e12" : "#a51313"} w={1.4} />)}
      <Candles data={LEFT_CANDLES} />
      <g stroke="#74777f" strokeWidth="1.1">
        <line x1="347" y1="315" x2="1252" y2="375" />
        <line x1="345" y1="448" x2="1252" y2="510" />
        <line x1="345" y1="583" x2="1252" y2="645" />
        <line x1="1011" y1="360" x2="1234" y2="507" />
        <line x1="1011" y1="427" x2="1234" y2="578" />
        <line x1="1011" y1="498" x2="1234" y2="648" />
      </g>
      <HLine x1={72} x2={1310} y={358} c="#f23645" w={1.8} dash="2 4" />
      <HLine x1={72} x2={1310} y={526} c="#4caf50" w={1.8} dash="2 4" />
      <HLine x1={72} x2={1310} y={522.6} c="#1f8f25" w={1} dash="1 2" />
      <HLine x1={72} x2={1310} y={428} c="#ff9800" w={2} />
      <Arrow
        pts={join(Z2("972,1090 1007,925 1045,1005 1080,810 1165,1305 1285,105"))}
        head="1258,240 1263,235 1268,241"
      />
      {[[403, 331], [686, 375.7], [1057, 367], [238, 523.7]].map(([x, y]) => <Dot key={x} x={x} y={y} c="#f23645" />)}
      {[[250, 665], [668, 517], [733.5, 553]].map(([x, y]) => <Dot key={x} x={x} y={y} c="#4caf50" />)}
      <Bolt x={1128.5} y={897} />
    </Plot>
  );
};

const RightMain = () => {
  const rows = Array.from({ length: 70 }, (_, i) => 340 + i * 4.5);
  const gray = Array.from({ length: 72 }, (_, i) => 345 + i * 4.5);
  return (
    <Plot width="456" height="884" viewBox="1386 27 456 884">
      <clipPath id="rightClip"><rect x="1448" y="27" width="400" height="884" /></clipPath>
      <g clipPath="url(#rightClip)">
        <Watermark x="1645" y="463" $size="96">FTSE, 1W</Watermark>
        <Watermark x="1644" y="540" $size="45">UK 100, Daily</Watermark>
        {rows.map((y) => {
          const t = stepValue(RIGHT_VOL, y);
          return (
            <g key={y} shapeRendering="crispEdges" opacity="0.7">
              <rect x={1448} y={y} width={t} height="2.6" fill="#6e211b" />
              <rect x={1448} y={y} width={t * 0.52} height="2.6" fill="#23512b" />
            </g>
          );
        })}
        {gray.map((y) => {
          const w = stepValue(RIGHT_GRAY, y);
          return <rect key={y} x={1754 - w} y={y} width={w} height="3.4" fill="#3e4047" shapeRendering="crispEdges" />;
        })}
        {[["(8,950)", 204], ["(8,488.8)", 338], ["(8,147.3)", 450], ["(7,655.1)", 584], ["(7,264.6)", 697], ["(6,812.4)", 831]].map(([t, y]) => (
          <g key={t}>
            <ChartLabel x="1467" y={y} $c="#787b86">{t}</ChartLabel>
            <HLine x1={1479} x2={1796} y={y} c="#9598a1" w={1.3} />
          </g>
        ))}
        {RIGHT_BANDS.map((b) => <Line key={b.pts} pts={b.pts} c={b.c} w={1.2} />)}
        <Candles data={RIGHT_CANDLES} />
        <g stroke="#9a9ea8" strokeWidth="1.2">
          <line x1="1448" y1="390" x2="1808" y2="271" />
          <line x1="1594" y1="344" x2="1767" y2="399" />
          <line x1="1568" y1="563" x2="1767" y2="456" />
          <line x1="1448" y1="688" x2="1841" y2="492" />
        </g>
        <HLine x1={1448} x2={1840} y={350} c="#f23645" w={1.8} dash="2 4" />
        <HLine x1={1448} x2={1840} y={566} c="#4caf50" w={1.8} dash="2 4" />
        <HLine x1={1448} x2={1754} y={412.5} c="#f23645" w={1} dash="1 2" />
        <HLine x1={1448} x2={1840} y={462.6} c="#f23645" w={1} dash="1 2" />
        <HLine x1={1448} x2={1840} y={410} c="#ff9800" w={2} />
        <Arrow pts="1760,476 1772,526 1815,340 1826,289" head="1821,294 1826,289 1830,295" />
        <circle cx="1544" cy="693" r="4" fill="#3c8f40" />
      </g>
      <Bolt x={1754} y={898} />
    </Plot>
  );
};

const Rsi = ({ w, h, x, y, runsData, x1, x2, zero }) => (
  <Plot width={w} height={h} viewBox={`${x} ${y} ${w} ${h}`}>
    <HLine x1={x1} x2={x2} y={zero} c="#14161c" w={1.5} />
    {runsData.map((r) => (
      <Line key={r.pts} pts={r.pts} c={r.c === "g" ? "#2e7d32" : "#a52c1e"} w={3} />
    ))}
  </Plot>
);

const Stoch = ({ w, x, x1, x2, band, lines, left }) => (
  <Plot width={w} height="129" viewBox={`${x} 1028 ${w} 129`}>
    <rect x={x1} y={band[0]} width={x2 - x1} height={band[1] - band[0]} fill="#2f2f2f" stroke="#777" strokeWidth="1" />
    <HLine x1={x1} x2={x2} y={1094} c="#777" dash="5 5" />
    <HLine x1={x1} x2={x2} y={1062.7} c="#f23c2a" w={1.2} />
    <HLine x1={x1} x2={x2} y={1125.3} c="#4caf50" w={1.2} />
    {left.map(([t, tx, ty]) => (
      <ChartLabel key={t} x={tx} y={ty} $c="#a3a6af">{t}</ChartLabel>
    ))}
    {lines.map((l) => <Line key={l.pts} pts={l.pts} c={l.c} w={1.1} />)}
  </Plot>
);

const TimeAxis = ({ w, x, labels, chips }) => (
  <Plot width={w} height="28" viewBox={`${x} 1157 ${w} 28`}>
    {labels.map(([t, tx, bold]) => (
      <TimeLabel key={t} x={tx} y={1173} $bold={bold}>{t}</TimeLabel>
    ))}
    {chips.map(([t, cx]) => (
      <g key={t}>
        <circle cx={cx} cy={1173} r="9.5" fill="#16181f" />
        <ScaleChip x={cx} y={1173}>{t}</ScaleChip>
      </g>
    ))}
  </Plot>
);

const Axis = ({ offset, step, pad = 9, values, children }) => (
  <PriceAxis>
    <AxisStack $offset={offset}>
      {values.map((v) => (
        <AxisRow key={v} $step={step} $pad={pad}>{v}</AxisRow>
      ))}
    </AxisStack>
    {children}
  </PriceAxis>
);

const LEFT_PRICES = ["9,000.0", "8,900.0", "8,800.0", "8,700.0", "8,600.0", "8,500.0", "8,400.0", "8,300.0", "8,200.0", "8,100.0", "8,000.0", "7,900.0", "7,800.0", "7,700.0", "7,600.0", "7,500.0", "7,400.0"];
const RIGHT_PRICES = ["9,400.0", "9,200.0", "9,000.0", "8,800.0", "8,600.0", "8,400.0", "8,200.0", "8,000.0", "7,800.0", "7,600.0", "7,400.0", "7,200.0", "7,000.0", "6,800.0", "6,600.0"];

const Logomark = () => (
  <Logo viewBox="0 0 36 28">
    <path d="M14 22H7V11H0V4h14v18ZM28 22h-8l7.5-18h8L28 22Z" />
    <circle cx="20" cy="8" r="4" />
  </Logo>
);

export default function App() {
  return (
    <Page>
      <GlobalStyle />
      <TopBar>Tickmill published on TradingView.com, Nov 18, 2024 15:00 UTC</TopBar>
      <Charts>
        <Panel $w={1370}>
          <Pane $h={883}>
            <LeftMain />
            <Axis offset={-10.5} step={52} values={LEFT_PRICES}>
              <PriceTag $left={0} $top={487} $w={67} $pad={9} $bg="#067d06" $fg="#d5e6d5">
                8,077.3
                <br />
                05:59:47
              </PriceTag>
            </Axis>
          </Pane>
          <Pane $h={118}>
            <Rsi w={1300} h={117} x={10} y={910} runsData={RSI_LEFT} x1={72} x2={1129} zero={979.7} />
            <Axis offset={-18.8} step={59} values={["80.0", "0.0"]} />
          </Pane>
          <Pane $h={129}>
            <Stoch
              w={1300}
              x={10}
              x1={72}
              x2={1309}
              band={[1091, 1101.3]}
              lines={STOCH_LEFT}
              left={[["80.00", 63, 1061.5], ["40.00", 63, 1104.5], ["0.00", 63, 1146.7]]}
            />
            <Axis offset={11.2} step={45} values={["80.00", "40.00", "0.00"]} />
          </Pane>
          <Pane $h={28} $last>
            <TimeAxis
              w={1370}
              x={10}
              labels={[["Apr", 155.5, 1], ["May", 285, 1], ["Jun", 421, 1], ["Jul", 539, 1], ["Aug", 674, 1], ["Sep", 803, 1], ["Oct", 927, 1], ["Nov", 1062.7, 1], ["Dec", 1187, 1]]}
              chips={[["Z", 41], ["A", 1345]]}
            />
          </Pane>
        </Panel>
        <Panel $w={521}>
          <Pane $h={885}>
            <RightMain />
            <Axis offset={19.2} step={58.43} values={RIGHT_PRICES}>
              <CurrencyButton>GBP</CurrencyButton>
              <PriceTag $left={0} $top={427} $w={60} $pad={9} $bg="#ff0000" $fg="#ffffff">
                8,077.3
                <br />
                4d 6h
              </PriceTag>
            </Axis>
          </Pane>
          <Pane $h={116}>
            <Rsi w={456} h={115} x={1386} y={912} runsData={RSI_RIGHT} x1={1448} x2={1754} zero={999} />
            <Axis offset={-15.8} step={41} values={["80.0", "40.0", "0.0"]} />
          </Pane>
          <Pane $h={129}>
            <Stoch
              w={456}
              x={1386}
              x1={1448}
              x2={1841}
              band={[1104.3, 1119.3]}
              lines={STOCH_RIGHT}
              left={[["80.00", 1438.6, 1061.7], ["40.00", 1438.6, 1104.7], ["0.00", 1438.6, 1146.7]]}
            />
            <Axis offset={15.1} step={33.8} values={["80.00", "60.00", "40.00"]} />
          </Pane>
          <Pane $h={28} $last>
            <TimeAxis
              w={521}
              x={1386}
              labels={[["2024", 1478, 1], ["May", 1586.5, 0], ["Sep", 1688, 0], ["2025", 1795, 1]]}
              chips={[["Z", 1417.5], ["A", 1874]]}
            />
          </Pane>
        </Panel>
      </Charts>
      <Footer>
        <Logomark />
        TradingView
      </Footer>
    </Page>
  );
}
